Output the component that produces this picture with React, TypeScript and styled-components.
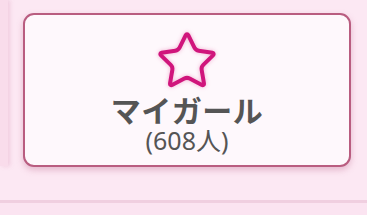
import styled, { createGlobalStyle } from "styled-components";

const GlobalStyle = createGlobalStyle`
  html, body {
    margin: 0;
    padding: 0;
    background: #fce7f2;
  }
`;

const Page = styled.div`
  width: 367px;
  height: 215px;
  overflow: hidden;
  background: #fce8f3;
  display: flex;
  flex-direction: column;
  font-family: "Noto Sans CJK JP", "Noto Sans", sans-serif;
`;

const Row = styled.div`
  display: flex;
  align-items: flex-start;
  height: 200px;
  padding-top: 13px;
  box-sizing: border-box;
`;

const PrevCard = styled.div`
  width: 8px;
  height: 166px;
  margin-top: -13px;
  background: #f9dceb;
  box-shadow: 2px 0 4px rgba(220, 150, 185, 0.35);
`;

const Card = styled.div`
  margin-left: 15px;
  width: 328px;
  height: 154px;
  box-sizing: border-box;
  border: 2px solid #b95d80;
  border-radius: 11px;
  background: #fef8fc;
  box-shadow: 0 3px 6px rgba(185, 95, 135, 0.35);
  display: flex;
  flex-direction: column;
  align-items: center;
  padding-top: 14px;
`;

const StarIcon = styled.svg`
  display: block;
  width: 64px;
  height: 64px;
  filter: drop-shadow(0 0 2px rgba(214, 40, 130, 0.35));
`;

const Title = styled.div`
  margin-top: -2px;
  font-size: 30px;
  line-height: 36px;
  font-weight: 700;
  color: #555555;
  letter-spacing: 0.5px;
`;

const Count = styled.div`
  font-family: "Noto Sans", "Noto Sans CJK JP", sans-serif;
  font-size: 25px;
  line-height: 26px;
  color: #555555;
`;

const Footer = styled.div`
  flex: 1;
  border-top: 3px solid #f0cfe0;
  background: #fbe4f1;
`;

function App() {
  return (
    <Page>
      <GlobalStyle />
      <Row>
        <PrevCard />
        <Card>
          <StarIcon viewBox="0 0 24 24" fill="none">
            <path
              d="M11.525 2.295a.53.53 0 0 1 .95 0l2.31 4.679a2.123 2.123 0 0 0 1.595 1.16l5.166.756a.53.53 0 0 1 .294.904l-3.736 3.638a2.123 2.123 0 0 0-.611 1.878l.882 5.14a.53.53 0 0 1-.771.56l-4.618-2.428a2.122 2.122 0 0 0-1.973 0L6.396 21.01a.53.53 0 0 1-.77-.56l.881-5.139a2.122 2.122 0 0 0-.611-1.879L2.16 9.795a.53.53 0 0 1 .294-.906l5.165-.755a2.122 2.122 0 0 0 1.597-1.16z"
              stroke="#d0157c"
              strokeWidth="1.5"
              strokeLinejoin="round"
              strokeLinecap="round"
            />
          </StarIcon>
          <Title>マイガール</Title>
          <Count>(608人)</Count>
        </Card>
      </Row>
      <Footer />
    </Page>
  );
}

export default App;
